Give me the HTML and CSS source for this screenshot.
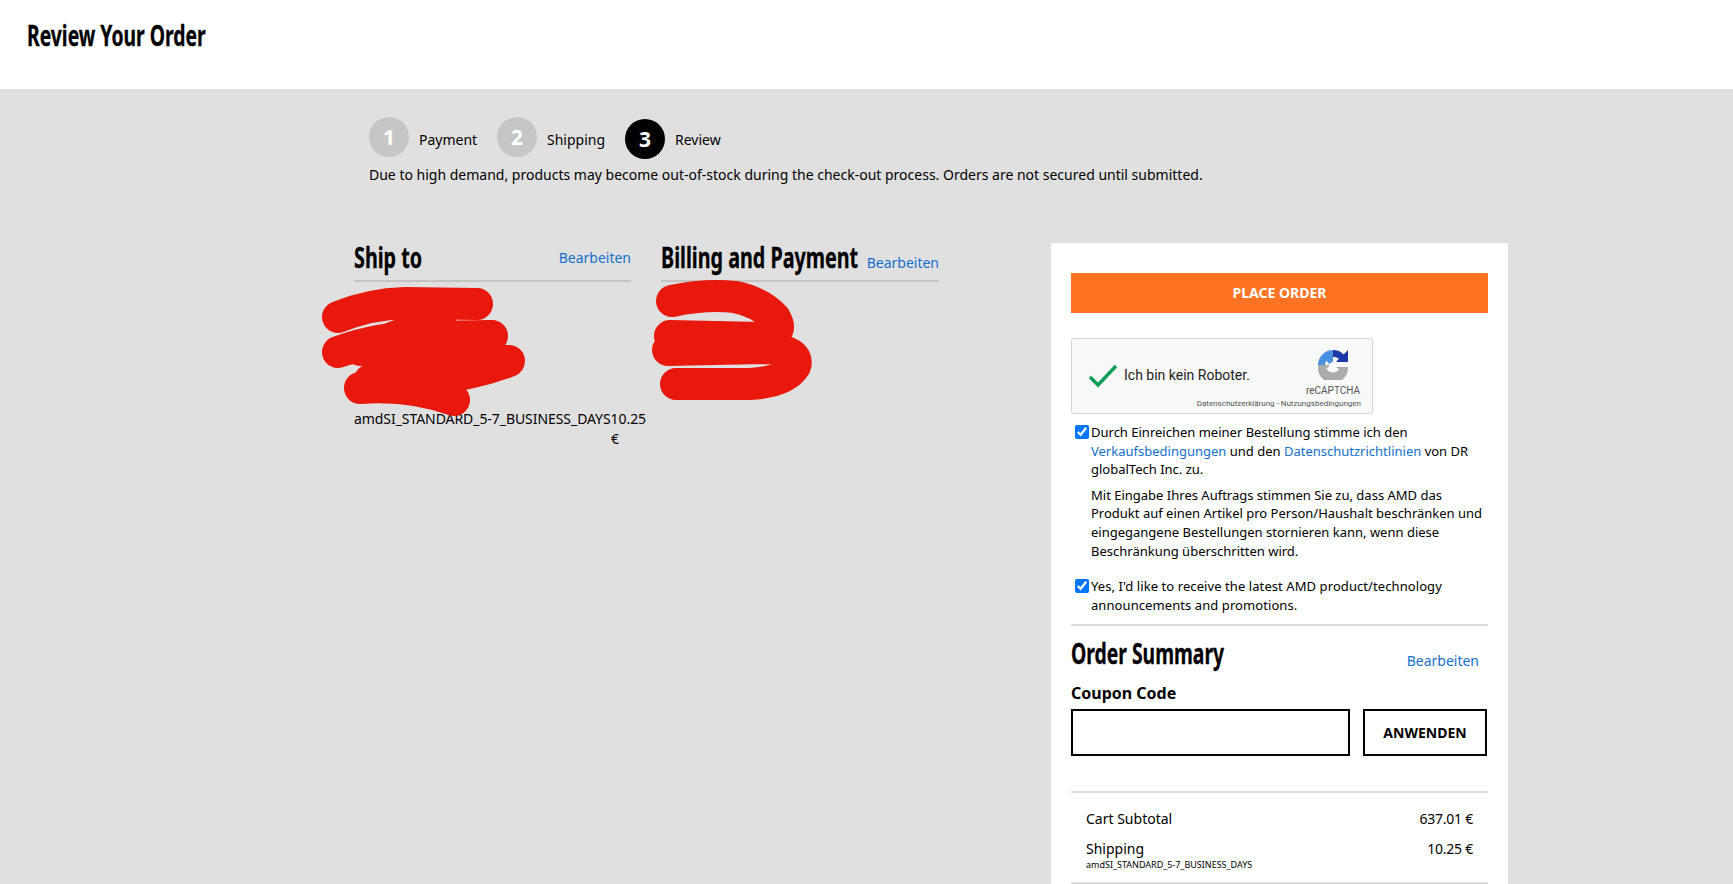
FILE: index.html
```html
<!DOCTYPE html>
<html lang="en">
<head>
<meta charset="utf-8">
<title>Review Your Order</title>
<link rel="stylesheet" href="styles.css">
</head>
<body>
<header class="topbar"><h1 class="page-title">Review Your Order</h1></header>
<main class="content">
  <div class="progress">
    <ol class="steps">
      <li class="step"><span class="bubble">1</span><span class="step-label">Payment</span></li>
      <li class="step"><span class="bubble">2</span><span class="step-label">Shipping</span></li>
      <li class="step step-current"><span class="bubble">3</span><span class="step-label">Review</span></li>
    </ol>
    <p class="notice">Due to high demand, products may become out-of-stock during the check-out process. Orders are not secured until submitted.</p>
  </div>
  <div class="columns">
    <section class="details">
      <div class="detail-col">
        <div class="detail-head"><h2 class="detail-title">Ship to</h2><a class="link" href="#">Bearbeiten</a></div>
        <div class="address"></div>
        <div class="ship-method"><span class="ship-name">amdSI_STANDARD_5-7_BUSINESS_DAYS10.25</span><span class="ship-unit">€</span></div>
      </div>
      <div class="detail-col detail-col-wide">
        <div class="detail-head detail-head-low"><h2 class="detail-title">Billing and Payment</h2><a class="link" href="#">Bearbeiten</a></div>
      </div>
    </section>
    <aside class="card">
      <button class="place-order" type="button">PLACE ORDER</button>
      <div class="captcha">
        <svg class="captcha-check" viewBox="0 0 30 24" width="30" height="24"><path d="M2 13l8 8L28 2" fill="none" stroke="#0f9d58" stroke-width="3.4"/></svg>
        <span class="captcha-label">Ich bin kein Roboter.</span>
        <div class="captcha-brand">
          <svg class="captcha-logo" viewBox="0 0 30 30" width="30" height="30">
            <path d="M15 0a15 15 0 0 1 10.600 4.400L30 0v12H18l3-3.500A8 8 0 0 0 15 7z" fill="#1c3aa9"/>
            <path d="M15 0V11.500L11 14 8.500 10.500A8 8 0 0 0 7 15H0A15 15 0 0 1 15 0z" fill="#4a90e2"/>
            <path d="M0 15H12L8.500 18.500A8 8 0 0 0 15 22.500c2.500 0 4.700-1.100 6.200-3L18 17H30v1A15 15 0 0 1 0 18z" fill="#ababab"/>
          </svg>
          <span class="captcha-name">reCAPTCHA</span>
          <span class="captcha-links">Datenschutzerklärung - Nutzungsbedingungen</span>
        </div>
      </div>
      <div class="consent">
        <p class="consent-line"><input class="tick" type="checkbox" checked>Durch Einreichen meiner Bestellung stimme ich den <a class="link" href="#">Verkaufsbedingungen</a> und den <a class="link" href="#">Datenschutzrichtlinien</a> von DR globalTech Inc. zu.</p>
        <p class="consent-text">Mit Eingabe Ihres Auftrags stimmen Sie zu, dass AMD das Produkt auf einen Artikel pro Person/Haushalt beschränken und eingegangene Bestellungen stornieren kann, wenn diese Beschränkung überschritten wird.</p>
        <p class="consent-line consent-last"><input class="tick" type="checkbox" checked>Yes, I'd like to receive the latest AMD product/technology announcements and promotions.</p>
      </div>
      <div class="summary-head"><h2 class="summary-title">Order Summary</h2><a class="link" href="#">Bearbeiten</a></div>
      <label class="coupon-label" for="coupon">Coupon Code</label>
      <div class="coupon-row"><input class="coupon-input" id="coupon" type="text"><button class="coupon-btn" type="button">ANWENDEN</button></div>
      <div class="totals">
        <div class="total-row"><span>Cart Subtotal</span><span class="amount">637.01 €</span></div>
        <div class="total-row total-ship"><div>Shipping<small class="total-note">amdSI_STANDARD_5-7_BUSINESS_DAYS</small></div><span class="amount">10.25 €</span></div>
      </div>
    </aside>
  </div>
</main>
<svg class="redactions" viewBox="0 0 1733 884" width="1733" height="884" aria-hidden="true">
  <path class="scribble" d="M338 317Q370 304 405 303L477 304M338 352Q380 337 420 337L492 336M400 362L509 361Q470 376 420 380M360 388Q410 384 454 400M360 350L440 320M370 380L450 350" />
  <path class="scribble" d="M672 301Q705 294 735 297Q760 302 775 318Q785 335 760 338L670 336M668 350L770 348Q800 352 795 366Q785 382 750 384L676 384" />
</svg>
</body>
</html>
```
FILE: styles.css
```css
* { box-sizing: border-box; }
html, body { height: 100%; margin: 0; overflow: hidden; }
body {
  position: relative;
  background: #e0e0e0;
  color: #000;
  font-family: "Noto Sans", "Open Sans", sans-serif;
  font-size: 14px;
  line-height: 19px;
}
.topbar { height: 89px; background: #fff; padding: 17px 27px 0; }
.page-title, .detail-title, .summary-title {
  width: 0;
  margin: 0;
  font-family: "Noto Sans", "DejaVu Sans", sans-serif;
  font-size: 28px;
  font-weight: 700;
  white-space: nowrap;
  -webkit-text-stroke: .3px #000;
  transform: scaleX(.69);
  transform-origin: left center;
}
.page-title { line-height: 36px; }
.content { padding-left: 354px; }
.progress { padding: 28px 0 0 15px; }
.steps { display: flex; align-items: flex-start; gap: 10px; margin: 0; padding: 0; list-style: none; }
.step { display: flex; align-items: center; gap: 10px; width: 118px; height: 40px; }
.step-label { margin-top: 4px; }
.step-current { margin-top: 2px; }
.step-current .step-label { margin-top: 0; }
.bubble {
  display: flex; align-items: center; justify-content: center;
  width: 40px; height: 40px; border-radius: 50%;
  background: #c6c6c6; color: #fff; font-size: 21px; font-weight: 700;
}
.step-current .bubble { background: #000; }
.notice { margin: 6px 0 0; }
.columns { display: flex; align-items: flex-start; margin-top: 59px; }
.details { display: flex; gap: 30px; width: 697px; }
.detail-col { width: 277px; }
.detail-col-wide { width: 278px; }
.detail-head {
  display: flex; justify-content: space-between; align-items: center;
  height: 39px; padding-bottom: 8px;
  border-bottom: 2px solid #c4c4c4;
}
.detail-head-low .link { margin-top: 10px; }
.detail-title { margin-bottom: 2px; line-height: 36px; transform: scaleX(.705); }
.link { color: #1470cc; text-decoration: none; }
.address { height: 127px; }
.ship-method { width: 277px; }
.ship-name { display: block; white-space: nowrap; letter-spacing: -.06px; }
.ship-unit { display: block; padding-right: 12px; text-align: right; line-height: 21px; }
.card { width: 457px; height: 641px; padding: 30px 20px 0; background: #fff; }
.place-order {
  display: block; width: 100%; height: 40px; padding: 0 0 2px; border: 0;
  background: #ff7322; color: #fff;
  font: 700 14px "Noto Sans", sans-serif;
}
.captcha {
  display: flex; position: relative; align-items: center;
  width: 302px; height: 76px; margin-top: 25px; padding-left: 16px;
  border: 1px solid #d3d3d3; border-radius: 3px; background: #f9f9f9;
  font-family: Roboto, sans-serif;
}
.captcha-label { margin: -2px 0 0 6px; font-size: 14px; color: #222; }
.captcha-brand {
  position: absolute; top: 11px; right: 11px;
  display: flex; flex-direction: column; align-items: flex-end;
}
.captcha-logo { margin-right: 13px; }
.captcha-name { margin-top: 5px; margin-right: 1px; font-size: 10px; line-height: 12px; color: #555; }
.captcha-links { margin-top: 1px; font-size: 8px; line-height: 12px; color: #555; }
.consent { margin-top: 9px; font-size: 13px; line-height: 18.600px; padding: 0 0 10px 20px; border-bottom: 2px solid #ddd; }
.consent p { margin: 0; }
.consent-text { margin-top: 7px !important; }
.consent-last { margin-top: 17px !important; letter-spacing: .08px; }
.tick { width: 14px; height: 14px; margin: 0 2px 0 -16px; vertical-align: -2px; accent-color: #0075ff; }
.summary-head { display: flex; justify-content: space-between; align-items: flex-end; height: 44px; padding-right: 9px; }
.summary-title { align-self: flex-start; margin-top: 5px; line-height: 44px; }
.coupon-label { display: block; margin-top: 12px; font-weight: 700; font-size: 16px; line-height: 22px; }
.coupon-row { display: flex; gap: 13px; margin-top: 5px; }
.coupon-input { width: 279px; height: 47px; border: 2px solid #000; background: #fff; border-radius: 0; }
.coupon-btn { width: 124px; height: 47px; border: 2px solid #000; background: #fff; font: 700 14px "Noto Sans", sans-serif; }
.totals { margin-top: 35px; padding: 16px 15px 11px; border-top: 2px solid #ddd; border-bottom: 2px solid #ddd; }
.total-row { display: flex; justify-content: space-between; align-items: flex-start; }
.total-ship { margin-top: 11px; }
.total-note { display: block; margin-top: 1px; font-size: 9px; line-height: 12px; }
.amount { letter-spacing: -.25px; }
.redactions { position: absolute; top: 0; left: 0; pointer-events: none; }
.scribble { fill: none; stroke: #e8190c; stroke-width: 32; stroke-linecap: round; stroke-linejoin: round; }
```
